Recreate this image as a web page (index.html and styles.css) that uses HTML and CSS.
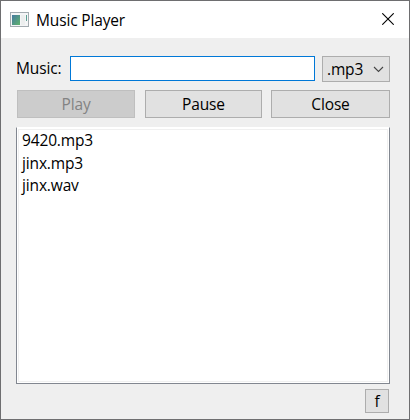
FILE: index.html
```html
<!DOCTYPE html>
<html lang="en">
<head>
<meta charset="utf-8">
<title>Music Player</title>
<link rel="stylesheet" href="styles.css">
</head>
<body>
<div class="window">
  <header class="titlebar">
    <svg class="app-icon" width="19" height="15" viewBox="0 0 19 15">
      <defs>
        <linearGradient id="screen" x1="0" y1="0" x2="1" y2="1">
          <stop offset="0" stop-color="#4579a0"/>
          <stop offset="1" stop-color="#5fb36c"/>
        </linearGradient>
      </defs>
      <rect x=".5" y=".5" width="18" height="14" fill="#f4f5f6" stroke="#a3abb0"/>
      <rect x="2" y="3" width="8" height="10" fill="url(#screen)"/>
      <rect x="11" y="3" width="4" height="10" fill="#eceeee"/>
      <rect x="16" y="3" width="1" height="6" fill="#5b9f92"/>
    </svg>
    <h1 class="title">Music Player</h1>
    <svg class="close-icon" width="12" height="12" viewBox="0 0 12 12">
      <path d="M.3 .3L11.7 11.7M11.7 .3L.3 11.7" stroke="#000" stroke-width="1.1" fill="none"/>
    </svg>
  </header>
  <main class="content">
    <div class="search">
      <label class="label" for="music">Music:</label>
      <input class="field" id="music" type="text">
      <div class="combo"><span>.mp3</span>
        <svg width="11" height="7" viewBox="0 0 11 7"><path d="M1 1L5.5 5.5L10 1" stroke="#444" stroke-width="1.1" fill="none"/></svg>
      </div>
    </div>
    <div class="actions">
      <button class="button play" disabled>Play</button>
      <button class="button">Pause</button>
      <button class="button">Close</button>
    </div>
    <ul class="list">
      <li>9420.mp3</li>
      <li>jinx.mp3</li>
      <li>jinx.wav</li>
    </ul>
    <button class="button small">f</button>
  </main>
</div>
</body>
</html>
```
FILE: styles.css
```css
* { box-sizing: border-box; }
body {
  margin: 0;
  font: 15.5px/20px "Open Sans", "Noto Sans", sans-serif;
  letter-spacing: -0.15px;
  color: #000;
}
.window {
  width: 410px;
  height: 420px;
  border: 1px solid #6e6e70;
  background: #efefef;
  overflow: hidden;
}
.titlebar {
  height: 37px;
  padding: 0 15px 0 9px;
  display: flex;
  align-items: center;
  background: #fff;
}
.title { margin: 0 auto 0 7px; font: inherit; }
.close-icon { display: block; margin-top: -1px; }
.content {
  display: flex;
  flex-direction: column;
  padding: 18px 19px 0 15px;
}
.search { display: flex; height: 26px; }
.label { width: 54px; line-height: 25px; }
.field {
  width: 245px;
  height: 25px;
  margin-right: 7px;
  border: 1px solid #0078d7;
  background: #fff;
  outline: none;
}
.combo {
  width: 68px;
  padding: 0 5px 0 4px;
  display: flex;
  align-items: center;
  justify-content: space-between;
  border: 1px solid #adadad;
  background: #e1e1e1;
}
.combo span { margin-top: -1px; }
.actions {
  display: grid;
  grid-template-columns: 118px 117px 118px;
  column-gap: 10px;
  margin: 8px 0 0 1px;
}
.actions .button:last-child { margin-left: -1px; }
.button {
  height: 28px;
  padding: 0;
  border: 1px solid #adadad;
  background: #e1e1e1;
  font: inherit;
  letter-spacing: inherit;
  color: #000;
}
.play { border-color: #bfbfbf; background: #ccc; color: #838383; }
.list {
  width: 374px;
  height: 257px;
  margin: 9px 0 5px;
  padding: 1px 3px;
  list-style: none;
  line-height: 22.5px;
  border: 1px solid #828790;
  border-top-color: #fff;
  background: #fff;
  box-shadow: inset 0 0 0 1px #fff, inset 0 0 0 2px #f0f0f0;
}
.list li { padding-left: 2px; }
.small { width: 24px; height: 24px; align-self: flex-end; margin-right: 1px; }
```
